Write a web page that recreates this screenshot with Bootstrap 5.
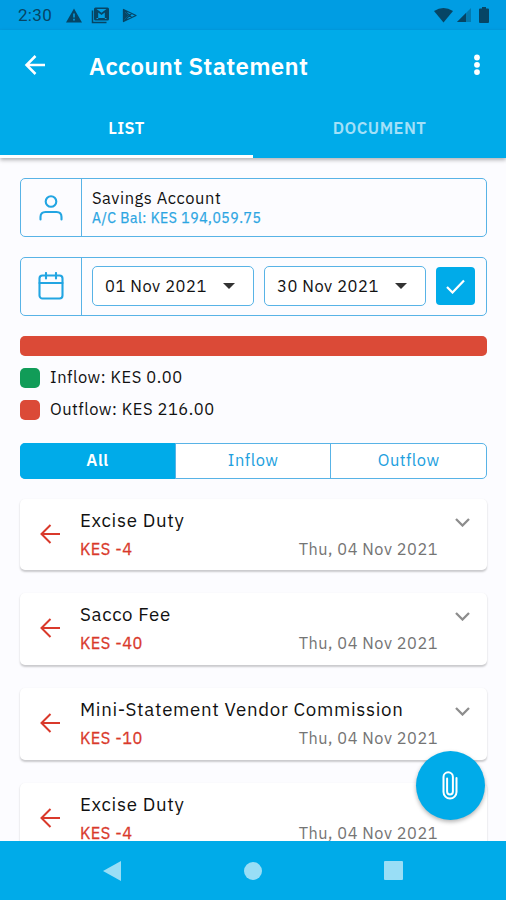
<!DOCTYPE html>
<html lang="en">
<head>
<meta charset="utf-8">
<meta name="viewport" content="width=device-width, initial-scale=1">
<title>Account Statement</title>
<link href="https://cdn.jsdelivr.net/npm/bootstrap@5.3.0/dist/css/bootstrap.min.css" rel="stylesheet">
<style>
:root { --brand: #00abe9; --line: #58b3e6; --red: #db4a37; }
body { font-family: "IBM Plex Sans", "Noto Sans", sans-serif; color: #111; background: #fcfcff; line-height: 1; }
svg { display: block; flex: none; }
.screen { height: 900px; overflow: hidden; }
.status-bar { height: 30px; background: #009de3; color: #064565; padding: 0 17px 0 18px; }
.clock { font: 17px/30px Roboto, sans-serif; width: 48px; letter-spacing: .3px; }
.app-bar { height: 70px; padding: 0 25px 1px 24px; }
.app-title { font-size: 24px; font-weight: 600; margin-left: 43px; line-height: 34px; letter-spacing: .32px; padding-top: 2px; }
.app-head { background: var(--brand); color: #fff; box-shadow: 0 2px 4px rgba(0,0,0,.3); z-index: 1; }
.tab-item { height: 58px; padding-top: 1px; font-size: 16.5px; letter-spacing: .45px; font-weight: 600; color: #fff; border-bottom: 3px solid transparent; }
.tab-item.current { border-color: #fff; }
.tab-item:not(.current) { color: #a3e0f8; }
.content { padding: 20px 19px 0 20px; letter-spacing: .53px; }
.field { height: 59px; border: 1.5px solid var(--line); border-radius: 5px; margin-bottom: 19.5px; }
.field-icon { width: 61px; border-right: 1.5px solid var(--line); color: #22a5e2; }
.field-body { padding-left: 10px; }
.acct-name { font-size: 16.5px; line-height: 22px; }
.acct-bal { font-size: 14px; line-height: 18px; color: #2ba5e2; margin-bottom: 1px; -webkit-text-stroke: .25px; }
.date-box { width: 162px; height: 40px; border: 1.5px solid var(--line); border-radius: 5px; background: #fff; padding: 0 18px 0 12px; font-size: 16.5px; }
.ok-btn { width: 39px; height: 38px; border-radius: 4px; background: var(--brand); color: #fff; border: 0; }
.flow-bar { height: 20px; border-radius: 5px; background: #ddd; margin: 20px 0 12px; }
.flow-bar .progress-bar { background: var(--red); }
.legend-row { height: 20px; margin-bottom: 12px; font-size: 16.5px; gap: 10px; }
.swatch { width: 20px; height: 20px; border-radius: 5px; background: var(--red); }
.swatch.inflow { background: #119c58; }
.segments { height: 36px; margin-top: 23px; border: 1.5px solid var(--line); border-radius: 5px; background: #fff; color: #22a0de; font-size: 16.5px; }
.segment + .segment { border-left: 1.5px solid var(--line); }
.segment.current { background: var(--brand); color: #fff; font-weight: 600; margin: -1px 0 -1px -1px; border-radius: 5px 0 0 5px; border-left: 0; }
.entries { margin-top: 20px; }
.entry { height: 71.5px; margin-bottom: 23.3px; background: #fff; border-radius: 5px; box-shadow: 0 1.5px 2px rgba(0,0,0,.2); padding: 9px 16px 0 20px; color: #d9392b; }
.entry-body { width: 358px; margin: -1px 0 0 19px; }
.entry-title { font-size: 18.7px; line-height: 26px; letter-spacing: .67px; color: #111; white-space: nowrap; }
.entry-meta { font-size: 16.3px; line-height: 22px; margin-top: 5px; }
.entry-amount { -webkit-text-stroke: .3px; }
.entry-date { color: #747474; }
.chev { margin: 10px 0 0 17px; color: #8d8d8d; }
.fab { left: 415.5px; top: 750.5px; width: 69px; height: 69px; background: var(--brand); color: #fff; box-shadow: 0 2px 4px rgba(0,0,0,.3); z-index: 2; }
.system-nav { height: 59px; background: var(--brand); color: #99def6; z-index: 3; padding: 0 103px; }
</style>
</head>
<body>
<div class="screen position-relative d-flex flex-column">
  <div class="status-bar d-flex align-items-center flex-shrink-0">
    <span class="clock">2:30</span>
    <svg width="16" height="15" viewBox="0 0 16 15"><path fill="currentColor" fill-rule="evenodd" d="M8 .5 16 14.500H0zM7.200 5.500v4h1.600v-4zm0 5.200v1.700h1.600v-1.700z"/></svg>
    <svg class="ms-2 me-1" width="20" height="17" viewBox="0 0 20 17"><path fill="none" stroke="currentColor" stroke-width="1.500" d="M2.500 3.500v12h14"/><path fill="currentColor" fill-rule="evenodd" d="M5.500.5h12q1.500 0 1.500 1.500v10q0 1.500-1.500 1.500h-12Q4 13.500 4 12V2Q4 .5 5.500.5zM6.500 2l5 3.800 5-3.800zm0 10h1.700V5.600l3.300 2.500 3.300-2.500V12h1.700V11H6.500z"/></svg>
    <svg class="ms-2 me-auto" width="17" height="15" viewBox="0 0 17 15"><path fill="none" stroke="currentColor" stroke-width="1.300" stroke-linejoin="round" d="M1.500 1.500v12L14 7.500zM1.500 1.500l8 8m-8 4 8-8"/><path fill="currentColor" d="M1 2v11l5.500-5.500z"/></svg>
    <svg width="19" height="15" viewBox="0 0 19 15"><path fill="currentColor" d="M0 3Q9.500-3 19 3L9.500 14.500z"/></svg>
    <svg class="ms-1" width="14" height="14" viewBox="0 0 14 14"><path fill="currentColor" opacity=".4" d="M14 0v14H0z"/><path fill="currentColor" d="M9 5v9H0z"/></svg>
    <svg class="ms-2" width="10" height="16" viewBox="0 0 10 16"><path fill="currentColor" d="M3 0h4v1.500h2q1 0 1 1V15q0 1-1 1H1q-1 0-1-1V2.500q0-1 1-1h2z"/></svg>
  </div>

  <header class="app-head position-relative flex-shrink-0">
    <div class="app-bar d-flex align-items-center">
      <svg width="22" height="20" viewBox="0 0 22 20"><path fill="none" stroke="currentColor" stroke-width="2.500" d="M21 10H3M11.500 1 2.500 10l9 9"/></svg>
      <div class="app-title me-auto">Account Statement</div>
      <svg width="8" height="22" viewBox="0 0 8 22" fill="currentColor"><circle cx="4" cy="3.500" r="2.900"/><circle cx="4" cy="10.800" r="2.900"/><circle cx="4" cy="18.100" r="2.900"/></svg>
    </div>
    <div class="row g-0 text-center">
      <div class="tab-item current col-6 d-flex align-items-center justify-content-center">LIST</div>
      <div class="tab-item col-6 d-flex align-items-center justify-content-center">DOCUMENT</div>
    </div>
  </header>

  <main class="content flex-grow-1 overflow-hidden">
    <div class="field d-flex">
      <div class="field-icon d-flex align-items-center justify-content-center">
        <svg width="24" height="26" viewBox="0 0 24 26" fill="none" stroke="currentColor" stroke-width="2.100" stroke-linecap="round"><circle cx="12" cy="6.500" r="5.300"/><path d="M1.500 24.500v-2.500q0-5 5-5h11q5 0 5 5v2.500"/></svg>
      </div>
      <div class="field-body d-flex flex-column justify-content-center">
        <div class="acct-name">Savings Account</div>
        <div class="acct-bal">A/C Bal: KES 194,059.75</div>
      </div>
    </div>

    <div class="field d-flex">
      <div class="field-icon d-flex align-items-center justify-content-center">
        <svg width="26" height="28" viewBox="0 0 26 28" fill="none" stroke="currentColor" stroke-width="2.100" stroke-linecap="round"><rect x="1.500" y="3.500" width="23" height="23" rx="3"/><path d="M1.500 11h23M8 1v5.500M18 1v5.500"/></svg>
      </div>
      <div class="field-body d-flex align-items-center justify-content-between flex-grow-1 pe-2 me-1">
        <div class="date-box d-flex align-items-center justify-content-between"><span>01 Nov 2021</span><svg width="12" height="6" viewBox="0 0 12 6"><path fill="#333" d="M0 0h12L6 6z"/></svg></div>
        <div class="date-box d-flex align-items-center justify-content-between"><span>30 Nov 2021</span><svg width="12" height="6" viewBox="0 0 12 6"><path fill="#333" d="M0 0h12L6 6z"/></svg></div>
        <button class="ok-btn d-flex align-items-center justify-content-center p-0" style="margin-right:-1px" aria-label="Apply"><svg width="19" height="15" viewBox="0 0 19 15"><path fill="none" stroke="currentColor" stroke-width="2.200" d="m1 8 5.500 5.500L18 1.500"/></svg></button>
      </div>
    </div>

    <div class="flow-bar progress"><div class="progress-bar" style="width:100%"></div></div>
    <div class="legend-row d-flex align-items-center"><span class="swatch inflow"></span><span>Inflow: KES 0.00</span></div>
    <div class="legend-row d-flex align-items-center"><span class="swatch"></span><span>Outflow: KES 216.00</span></div>

    <div class="segments d-flex">
      <div class="segment current flex-fill w-100 d-flex align-items-center justify-content-center">All</div>
      <div class="segment flex-fill w-100 d-flex align-items-center justify-content-center">Inflow</div>
      <div class="segment flex-fill w-100 d-flex align-items-center justify-content-center">Outflow</div>
    </div>

    <div class="entries">
      <div class="entry d-flex align-items-start">
        <svg class="mt-3" width="21" height="20" viewBox="0 0 21 20"><path fill="none" stroke="currentColor" stroke-width="2" d="M20 10H2M10.500 1 1.500 10l9 9"/></svg>
        <div class="entry-body"><div class="entry-title">Excise Duty</div><div class="entry-meta d-flex justify-content-between"><span class="entry-amount">KES -4</span><span class="entry-date">Thu, 04 Nov 2021</span></div></div>
        <svg class="chev" width="15" height="9" viewBox="0 0 15 9"><path fill="none" stroke="currentColor" stroke-width="2.300" d="m1 1 6.500 6.500L14 1"/></svg>
      </div>
      <div class="entry d-flex align-items-start">
        <svg class="mt-3" width="21" height="20" viewBox="0 0 21 20"><path fill="none" stroke="currentColor" stroke-width="2" d="M20 10H2M10.500 1 1.500 10l9 9"/></svg>
        <div class="entry-body"><div class="entry-title">Sacco Fee</div><div class="entry-meta d-flex justify-content-between"><span class="entry-amount">KES -40</span><span class="entry-date">Thu, 04 Nov 2021</span></div></div>
        <svg class="chev" width="15" height="9" viewBox="0 0 15 9"><path fill="none" stroke="currentColor" stroke-width="2.300" d="m1 1 6.500 6.500L14 1"/></svg>
      </div>
      <div class="entry d-flex align-items-start">
        <svg class="mt-3" width="21" height="20" viewBox="0 0 21 20"><path fill="none" stroke="currentColor" stroke-width="2" d="M20 10H2M10.500 1 1.500 10l9 9"/></svg>
        <div class="entry-body"><div class="entry-title">Mini-Statement Vendor Commission</div><div class="entry-meta d-flex justify-content-between"><span class="entry-amount">KES -10</span><span class="entry-date">Thu, 04 Nov 2021</span></div></div>
        <svg class="chev" width="15" height="9" viewBox="0 0 15 9"><path fill="none" stroke="currentColor" stroke-width="2.300" d="m1 1 6.500 6.500L14 1"/></svg>
      </div>
      <div class="entry d-flex align-items-start">
        <svg class="mt-3" width="21" height="20" viewBox="0 0 21 20"><path fill="none" stroke="currentColor" stroke-width="2" d="M20 10H2M10.500 1 1.500 10l9 9"/></svg>
        <div class="entry-body"><div class="entry-title">Excise Duty</div><div class="entry-meta d-flex justify-content-between"><span class="entry-amount">KES -4</span><span class="entry-date">Thu, 04 Nov 2021</span></div></div>
      </div>
    </div>
  </main>

  <div class="fab position-absolute rounded-circle d-flex align-items-center justify-content-center">
    <svg width="16" height="29" viewBox="0 0 16 29"><path fill="none" stroke="currentColor" stroke-width="2" stroke-linecap="round" d="M14.500 7v14a6.500 6.500 0 0 1-13 0V6a4.700 4.700 0 0 1 9.400 0v14.500a2.900 2.900 0 0 1-5.800 0V7.500"/></svg>
  </div>

  <nav class="system-nav position-relative d-flex align-items-center justify-content-between flex-shrink-0">
    <svg width="19" height="20" viewBox="0 0 19 20"><path fill="currentColor" d="M18 0v20L0 10z"/></svg>
    <svg width="18" height="18" viewBox="0 0 18 18"><circle cx="9" cy="9" r="9" fill="currentColor"/></svg>
    <svg width="19" height="19" viewBox="0 0 19 19"><rect width="19" height="19" rx="1" fill="currentColor"/></svg>
  </nav>
</div>
<script src="https://cdn.jsdelivr.net/npm/bootstrap@5.3.0/dist/js/bootstrap.bundle.min.js"></script>
</body>
</html>
